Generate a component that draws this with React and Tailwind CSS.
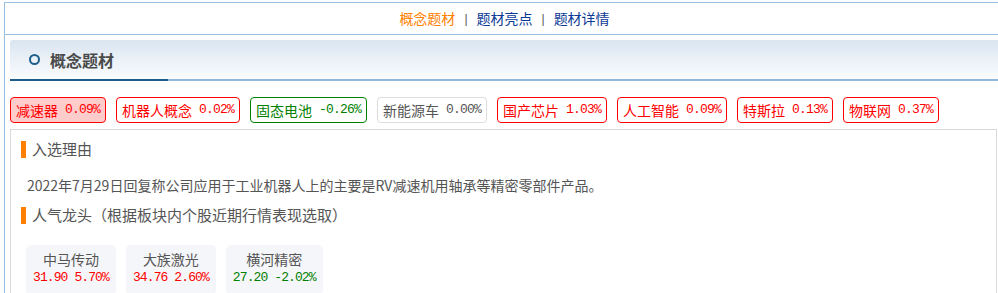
import React from "react";

const tags = [
  { name: "减速器", pct: "0.09%", tone: "active" },
  { name: "机器人概念", pct: "0.02%", tone: "up" },
  { name: "固态电池", pct: "-0.26%", tone: "down" },
  { name: "新能源车", pct: "0.00%", tone: "flat" },
  { name: "国产芯片", pct: "1.03%", tone: "up" },
  { name: "人工智能", pct: "0.09%", tone: "up" },
  { name: "特斯拉", pct: "0.13%", tone: "up" },
  { name: "物联网", pct: "0.37%", tone: "up" },
];

const toneClass = {
  active: "border-[#ff0000] bg-[#ffcccc] text-[#ff0000]",
  up: "border-[#ff0000] bg-white text-[#ff0000]",
  down: "border-[#008000] bg-white text-[#008000]",
  flat: "border-[#dddddd] bg-white text-[#555555]",
};

const leaders = [
  { name: "中马传动", price: "31.90", pct: "5.70%", up: true },
  { name: "大族激光", price: "34.76", pct: "2.60%", up: true },
  { name: "横河精密", price: "27.20", pct: "-2.02%", up: false },
];

const cjk = "font-['Noto_Sans_CJK_SC',sans-serif]";
const mono = "font-['Liberation_Mono','Noto_Sans_CJK_SC',monospace]";

const SubTitle = ({ children }) => (
  <div className="flex h-[18px] items-center">
    <span className="h-[17px] w-[5px] bg-[#ff8000]" />
    <span className="ml-[6px] text-[15px] leading-[18px] text-[#555555]">{children}</span>
  </div>
);

export default function App() {
  return (
    <div className={`min-h-screen bg-white pt-[2px] pl-[4px] ${cjk}`}>
      <div className="border-l border-t border-[#9bbfdf]">
        {/* top nav */}
        <div className="flex h-[32px] items-center justify-center border-b border-[#9bbfdf] pl-[6px] text-[14px]">
          <span className="text-[#ff8000]">概念题材</span>
          <span className="mx-[9px] font-['Liberation_Sans',sans-serif] text-[12px] text-[#555555]">|</span>
          <span className="text-[#0b3a96]">题材亮点</span>
          <span className="mx-[9px] font-['Liberation_Sans',sans-serif] text-[12px] text-[#555555]">|</span>
          <span className="text-[#0b3a96]">题材详情</span>
        </div>

        <div className="pl-[5px] pt-[5px]">
          {/* section header */}
          <div className="flex flex-col">
            <div className="flex h-[39px] items-center rounded-tl-[3px] bg-gradient-to-b from-[#dae5f1] to-[#fafcfe] pl-[19px]">
              <span className="h-[11px] w-[11px] rounded-full border-2 border-[#1f5f8b]" />
              <span className="ml-[10px] text-[16px] font-bold text-[#4a4a4a]">概念题材</span>
            </div>
            <div className="flex h-[2px]">
              <div className="w-[158px] bg-[#1d5d8a]" />
              <div className="flex-1 bg-[#8fb8dc]" />
            </div>
          </div>

          {/* concept tags */}
          <div className="mt-[16px] flex gap-[10px]">
            {tags.map((t) => (
              <div
                key={t.name}
                className={`flex h-[26px] items-center rounded-[4px] border px-[5px] ${toneClass[t.tone]}`}
              >
                <span className="text-[14px] leading-[20px]">{t.name}</span>
                <span className={`${mono} whitespace-pre text-[13px] tracking-[-0.8px]`}>{" " + t.pct}</span>
              </div>
            ))}
          </div>

          {/* detail box */}
          <div className="mr-[1px] mt-[6px] border border-[#d9d9d9] pl-[10px] pt-[10px] pb-[12px]">
            <SubTitle>入选理由</SubTitle>
            <p className="ml-[6px] mt-[17px] text-[14px] leading-[20px] text-[#555555]">
              2022年7月29日回复称公司应用于工业机器人上的主要是RV减速机用轴承等精密零部件产品。
            </p>
            <div className="mt-[11px]">
              <SubTitle>人气龙头（根据板块内个股近期行情表现选取）</SubTitle>
            </div>
            <div className="ml-[5px] mt-[21px] flex gap-[10px]">
              {leaders.map((s) => (
                <div key={s.name} className="flex flex-col items-center rounded-[5px] bg-[#f5f6f9] px-[7px] pb-[8px] pt-[4px]">
                  <span className="text-[14px] leading-[20px] text-[#555555]">{s.name}</span>
                  <span
                    className={`${mono} whitespace-pre text-[13px] leading-[18px] tracking-[-0.9px] ${
                      s.up ? "text-[#ff0000]" : "text-[#008000]"
                    }`}
                  >
                    {s.price + " " + s.pct}
                  </span>
                </div>
              ))}
            </div>
          </div>
        </div>
      </div>
    </div>
  );
}
